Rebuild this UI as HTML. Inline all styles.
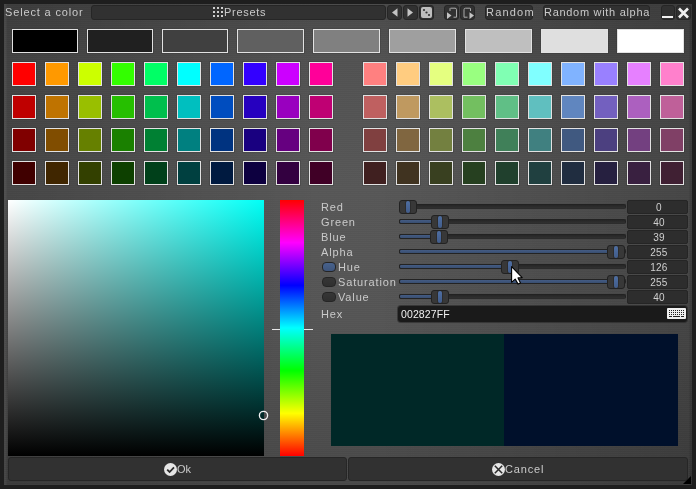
<!DOCTYPE html>
<html><head><meta charset="utf-8"><title>Select a color</title>
<style>
html,body{margin:0;padding:0;background:#1e1e1e;}
body{width:696px;height:489px;background:#1e1e1e;overflow:hidden;position:relative;font-family:"Liberation Sans",sans-serif;font-size:11px;color:#cfcfcf;}
#win{position:absolute;left:4px;top:4px;width:688px;height:481px;background:repeating-linear-gradient(to bottom,rgba(255,255,255,.012) 0,rgba(255,255,255,.012) 1px,rgba(0,0,0,.012) 1px,rgba(0,0,0,.012) 2px),linear-gradient(to right,rgba(255,255,255,.05) 0,rgba(255,255,255,.05) 2px,rgba(0,0,0,0) 3px,rgba(0,0,0,0) 685px,rgba(0,0,0,.12) 686px,rgba(0,0,0,.12) 688px),linear-gradient(to right,rgba(0,0,0,.2) 0%,rgba(0,0,0,0) 46%,rgba(0,0,0,0) 54%,rgba(0,0,0,.2) 100%),linear-gradient(to bottom,#4a4a4a 0%,#525252 12%,#575757 38%,#555555 66%,#494949 100%);}
.a{position:absolute;}
.sw{position:absolute;box-sizing:border-box;border:1px solid #e2e2e2;box-shadow:0 0 0 1px rgba(40,40,40,.2);}
.btn{position:absolute;box-sizing:border-box;background:#313131;border:1px solid #262626;border-radius:3px;}
.t{position:absolute;white-space:nowrap;line-height:12px;letter-spacing:.85px;color:#cacaca;will-change:transform;}
.track{position:absolute;box-sizing:border-box;height:5px;background:linear-gradient(#262626,#303030);border:1px solid #222;border-bottom-color:#2c2c2c;border-radius:2px;}
.fill{position:absolute;box-sizing:border-box;height:5px;background:linear-gradient(#445c84,#394e70);border:1px solid #232323;border-radius:2px;}
.h{position:absolute;box-sizing:border-box;width:18px;height:14px;background:#383838;overflow:hidden;border:1px solid #222;border-radius:3px;}
.h i{position:absolute;left:6px;top:0px;width:4px;height:12px;background:linear-gradient(#4e6ea2,#415c8a);border-radius:2px;box-shadow:0 0 0 1px rgba(30,30,30,.45);}
.vb{position:absolute;box-sizing:border-box;left:627px;width:61px;height:14px;background:#2d2d2d;border:1px solid #252525;border-radius:2px;text-align:center;line-height:14px;color:#cfcfcf;letter-spacing:.2px;font-size:10px;padding-left:3px;will-change:transform}
.rd{position:absolute;box-sizing:border-box;left:322px;width:14px;height:10px;border:1px solid #252525;border-radius:4px;background:linear-gradient(#363636,#2f2f2f);}
</style></head><body><div id="win"></div>

<div class="t" style="left:5px;top:6px;">Select a color</div>
<div class="btn" style="left:91px;top:5px;width:295px;height:15px;"></div>
<div class="a" style="left:213px;top:7px;width:2px;height:2px;background:#cfcfcf"></div>
<div class="a" style="left:213px;top:11px;width:2px;height:2px;background:#cfcfcf"></div>
<div class="a" style="left:213px;top:15px;width:2px;height:2px;background:#cfcfcf"></div>
<div class="a" style="left:217px;top:7px;width:2px;height:2px;background:#cfcfcf"></div>
<div class="a" style="left:217px;top:11px;width:2px;height:2px;background:#cfcfcf"></div>
<div class="a" style="left:217px;top:15px;width:2px;height:2px;background:#cfcfcf"></div>
<div class="a" style="left:221px;top:7px;width:2px;height:2px;background:#cfcfcf"></div>
<div class="a" style="left:221px;top:11px;width:2px;height:2px;background:#cfcfcf"></div>
<div class="a" style="left:221px;top:15px;width:2px;height:2px;background:#cfcfcf"></div>
<div class="t" style="left:224px;top:6px;letter-spacing:.7px">Presets</div>
<div class="btn" style="left:387px;top:5px;width:15px;height:15px;"></div>
<div class="btn" style="left:403px;top:5px;width:15px;height:15px;"></div>
<div class="btn" style="left:419px;top:5px;width:15px;height:15px;"></div>
<div class="btn" style="left:444px;top:5px;width:15px;height:15px;"></div>
<div class="btn" style="left:460px;top:5px;width:15px;height:15px;"></div>
<svg class="a" style="left:387px;top:5px" width="90" height="15" viewBox="0 0 90 15"><path d="M10.5 3.2 L10.5 11.8 L5 7.5 Z" fill="#c4c4c4"/><path d="M20.5 3.2 L20.5 11.8 L26 7.5 Z" fill="#c4c4c4"/><rect x="34" y="2" width="11" height="11" rx="2" fill="#bebebe"/><circle cx="37" cy="5" r="1.1" fill="#333"/><circle cx="39.5" cy="7.5" r="1.1" fill="#333"/><circle cx="42" cy="10" r="1.1" fill="#333"/><path d="M63.5 3.2 H68 Q69.5 3.2 69.5 4.7 V12.2 H66.5" fill="none" stroke="#ababab" stroke-width="1"/><path d="M63 3.2 V6" fill="none" stroke="#ababab" stroke-width="1"/><path d="M60 7.2 L60 14 L64.5 10.6 Z" fill="#c4c4c4"/><path d="M83 3.2 H78.5 Q77 3.2 77 4.7 V12.2 H80.5" fill="none" stroke="#ababab" stroke-width="1"/><path d="M83.5 3.2 V6" fill="none" stroke="#ababab" stroke-width="1"/><path d="M82.5 7.2 L82.5 14 L87 10.6 Z" fill="#c4c4c4"/></svg>
<div class="btn" style="left:485px;top:5px;width:48px;height:15px;"></div>
<div class="t" style="left:486px;top:6px;letter-spacing:1.2px">Random</div>
<div class="btn" style="left:543px;top:5px;width:107px;height:15px;"></div>
<div class="t" style="left:544px;top:6px;letter-spacing:.7px">Random with alpha</div>
<div class="btn" style="left:661px;top:5px;width:14px;height:15px;"></div>
<div class="a" style="left:662px;top:16px;width:11px;height:2px;background:#f0f0f0"></div>
<div class="btn" style="left:676px;top:5px;width:15px;height:15px;"></div>
<svg class="a" style="left:676px;top:5px" width="15" height="15"><path d="M3 3.5 L12 12.5 M12 3.5 L3 12.5" stroke="#f0f0f0" stroke-width="2.6" fill="none"/></svg>
<div class="sw" style="left:12px;top:29px;width:66px;height:24px;background:#000000"></div>
<div class="sw" style="left:87px;top:29px;width:66px;height:24px;background:#202020"></div>
<div class="sw" style="left:162px;top:29px;width:66px;height:24px;background:#404040"></div>
<div class="sw" style="left:237px;top:29px;width:67px;height:24px;background:#606060"></div>
<div class="sw" style="left:313px;top:29px;width:67px;height:24px;background:#808080"></div>
<div class="sw" style="left:389px;top:29px;width:67px;height:24px;background:#9f9f9f"></div>
<div class="sw" style="left:465px;top:29px;width:67px;height:24px;background:#bfbfbf"></div>
<div class="sw" style="left:541px;top:29px;width:67px;height:24px;background:#dfdfdf"></div>
<div class="sw" style="left:617px;top:29px;width:67px;height:24px;background:#ffffff"></div>
<div class="sw" style="left:12px;top:62px;width:24px;height:24px;background:#ff0000"></div>
<div class="sw" style="left:45px;top:62px;width:24px;height:24px;background:#ff9900"></div>
<div class="sw" style="left:78px;top:62px;width:24px;height:24px;background:#ccff00"></div>
<div class="sw" style="left:111px;top:62px;width:24px;height:24px;background:#33ff00"></div>
<div class="sw" style="left:144px;top:62px;width:24px;height:24px;background:#00ff66"></div>
<div class="sw" style="left:177px;top:62px;width:24px;height:24px;background:#00ffff"></div>
<div class="sw" style="left:210px;top:62px;width:24px;height:24px;background:#0066ff"></div>
<div class="sw" style="left:243px;top:62px;width:24px;height:24px;background:#3300ff"></div>
<div class="sw" style="left:276px;top:62px;width:24px;height:24px;background:#cc00ff"></div>
<div class="sw" style="left:309px;top:62px;width:24px;height:24px;background:#ff0099"></div>
<div class="sw" style="left:12px;top:95px;width:24px;height:24px;background:#bf0000"></div>
<div class="sw" style="left:45px;top:95px;width:24px;height:24px;background:#bf7300"></div>
<div class="sw" style="left:78px;top:95px;width:24px;height:24px;background:#99bf00"></div>
<div class="sw" style="left:111px;top:95px;width:24px;height:24px;background:#26bf00"></div>
<div class="sw" style="left:144px;top:95px;width:24px;height:24px;background:#00bf4d"></div>
<div class="sw" style="left:177px;top:95px;width:24px;height:24px;background:#00bfbf"></div>
<div class="sw" style="left:210px;top:95px;width:24px;height:24px;background:#004dbf"></div>
<div class="sw" style="left:243px;top:95px;width:24px;height:24px;background:#2600bf"></div>
<div class="sw" style="left:276px;top:95px;width:24px;height:24px;background:#9900bf"></div>
<div class="sw" style="left:309px;top:95px;width:24px;height:24px;background:#bf0073"></div>
<div class="sw" style="left:12px;top:128px;width:24px;height:24px;background:#800000"></div>
<div class="sw" style="left:45px;top:128px;width:24px;height:24px;background:#804d00"></div>
<div class="sw" style="left:78px;top:128px;width:24px;height:24px;background:#668000"></div>
<div class="sw" style="left:111px;top:128px;width:24px;height:24px;background:#1a8000"></div>
<div class="sw" style="left:144px;top:128px;width:24px;height:24px;background:#008033"></div>
<div class="sw" style="left:177px;top:128px;width:24px;height:24px;background:#008080"></div>
<div class="sw" style="left:210px;top:128px;width:24px;height:24px;background:#003380"></div>
<div class="sw" style="left:243px;top:128px;width:24px;height:24px;background:#190080"></div>
<div class="sw" style="left:276px;top:128px;width:24px;height:24px;background:#660080"></div>
<div class="sw" style="left:309px;top:128px;width:24px;height:24px;background:#80004c"></div>
<div class="sw" style="left:12px;top:161px;width:24px;height:24px;background:#400000"></div>
<div class="sw" style="left:45px;top:161px;width:24px;height:24px;background:#402600"></div>
<div class="sw" style="left:78px;top:161px;width:24px;height:24px;background:#334000"></div>
<div class="sw" style="left:111px;top:161px;width:24px;height:24px;background:#0d4000"></div>
<div class="sw" style="left:144px;top:161px;width:24px;height:24px;background:#00401a"></div>
<div class="sw" style="left:177px;top:161px;width:24px;height:24px;background:#004040"></div>
<div class="sw" style="left:210px;top:161px;width:24px;height:24px;background:#001a40"></div>
<div class="sw" style="left:243px;top:161px;width:24px;height:24px;background:#0d0040"></div>
<div class="sw" style="left:276px;top:161px;width:24px;height:24px;background:#330040"></div>
<div class="sw" style="left:309px;top:161px;width:24px;height:24px;background:#400026"></div>
<div class="sw" style="left:363px;top:62px;width:24px;height:24px;background:#ff8080"></div>
<div class="sw" style="left:396px;top:62px;width:24px;height:24px;background:#ffcc80"></div>
<div class="sw" style="left:429px;top:62px;width:24px;height:24px;background:#e5ff80"></div>
<div class="sw" style="left:462px;top:62px;width:24px;height:24px;background:#99ff80"></div>
<div class="sw" style="left:495px;top:62px;width:24px;height:24px;background:#80ffb3"></div>
<div class="sw" style="left:528px;top:62px;width:24px;height:24px;background:#80ffff"></div>
<div class="sw" style="left:561px;top:62px;width:24px;height:24px;background:#80b3ff"></div>
<div class="sw" style="left:594px;top:62px;width:24px;height:24px;background:#9980ff"></div>
<div class="sw" style="left:627px;top:62px;width:24px;height:24px;background:#e680ff"></div>
<div class="sw" style="left:660px;top:62px;width:24px;height:24px;background:#ff80cc"></div>
<div class="sw" style="left:363px;top:95px;width:24px;height:24px;background:#bf6060"></div>
<div class="sw" style="left:396px;top:95px;width:24px;height:24px;background:#bf9960"></div>
<div class="sw" style="left:429px;top:95px;width:24px;height:24px;background:#acbf60"></div>
<div class="sw" style="left:462px;top:95px;width:24px;height:24px;background:#73bf60"></div>
<div class="sw" style="left:495px;top:95px;width:24px;height:24px;background:#60bf86"></div>
<div class="sw" style="left:528px;top:95px;width:24px;height:24px;background:#60bfbf"></div>
<div class="sw" style="left:561px;top:95px;width:24px;height:24px;background:#6086bf"></div>
<div class="sw" style="left:594px;top:95px;width:24px;height:24px;background:#7360bf"></div>
<div class="sw" style="left:627px;top:95px;width:24px;height:24px;background:#ac60bf"></div>
<div class="sw" style="left:660px;top:95px;width:24px;height:24px;background:#bf6099"></div>
<div class="sw" style="left:363px;top:128px;width:24px;height:24px;background:#804040"></div>
<div class="sw" style="left:396px;top:128px;width:24px;height:24px;background:#806640"></div>
<div class="sw" style="left:429px;top:128px;width:24px;height:24px;background:#738040"></div>
<div class="sw" style="left:462px;top:128px;width:24px;height:24px;background:#4d8040"></div>
<div class="sw" style="left:495px;top:128px;width:24px;height:24px;background:#408059"></div>
<div class="sw" style="left:528px;top:128px;width:24px;height:24px;background:#408080"></div>
<div class="sw" style="left:561px;top:128px;width:24px;height:24px;background:#405980"></div>
<div class="sw" style="left:594px;top:128px;width:24px;height:24px;background:#4c4080"></div>
<div class="sw" style="left:627px;top:128px;width:24px;height:24px;background:#734080"></div>
<div class="sw" style="left:660px;top:128px;width:24px;height:24px;background:#804066"></div>
<div class="sw" style="left:363px;top:161px;width:24px;height:24px;background:#402020"></div>
<div class="sw" style="left:396px;top:161px;width:24px;height:24px;background:#403320"></div>
<div class="sw" style="left:429px;top:161px;width:24px;height:24px;background:#394020"></div>
<div class="sw" style="left:462px;top:161px;width:24px;height:24px;background:#264020"></div>
<div class="sw" style="left:495px;top:161px;width:24px;height:24px;background:#20402d"></div>
<div class="sw" style="left:528px;top:161px;width:24px;height:24px;background:#204040"></div>
<div class="sw" style="left:561px;top:161px;width:24px;height:24px;background:#202d40"></div>
<div class="sw" style="left:594px;top:161px;width:24px;height:24px;background:#262040"></div>
<div class="sw" style="left:627px;top:161px;width:24px;height:24px;background:#392040"></div>
<div class="sw" style="left:660px;top:161px;width:24px;height:24px;background:#402033"></div>
<div class="a" style="left:8px;top:200px;width:256px;height:256px;background:linear-gradient(to top,#000,rgba(0,0,0,0)),linear-gradient(to right,#fff,#00fff6)"></div>
<div class="a" style="left:280px;top:200px;width:24px;height:256px;background:linear-gradient(to bottom,#f00 0%,#f0f 16.667%,#00f 33.333%,#0ff 50%,#0f0 66.667%,#ff0 83.333%,#f00 100%)"></div>
<div class="a" style="left:272px;top:329px;width:8px;height:1px;background:#e8e8e8"></div>
<div class="a" style="left:304px;top:329px;width:9px;height:1px;background:#e8e8e8"></div>
<svg class="a" style="left:258px;top:410px" width="11" height="11"><circle cx="5.5" cy="5.5" r="4.1" fill="none" stroke="#f2f2f2" stroke-width="1.35"/></svg>
<div class="t" style="left:321px;top:201px;">Red</div>
<div class="track" style="left:399px;top:204px;width:227px;"></div>
<div class="h" style="left:399px;top:200px;"><i></i></div>
<div class="vb" style="top:200px;">0</div>
<div class="t" style="left:321px;top:216px;">Green</div>
<div class="track" style="left:399px;top:219px;width:227px;"></div>
<div class="fill" style="left:399px;top:219px;width:36px;"></div>
<div class="h" style="left:431px;top:215px;"><i></i></div>
<div class="vb" style="top:215px;">40</div>
<div class="t" style="left:321px;top:231px;">Blue</div>
<div class="track" style="left:399px;top:234px;width:227px;"></div>
<div class="fill" style="left:399px;top:234px;width:35px;"></div>
<div class="h" style="left:430px;top:230px;"><i></i></div>
<div class="vb" style="top:230px;">39</div>
<div class="t" style="left:321px;top:246px;">Alpha</div>
<div class="track" style="left:399px;top:249px;width:227px;"></div>
<div class="fill" style="left:399px;top:249px;width:212px;"></div>
<div class="h" style="left:607px;top:245px;"><i></i></div>
<div class="vb" style="top:245px;">255</div>
<div class="rd" style="top:262px;background:linear-gradient(#48628c,#3e557c);"></div>
<div class="t" style="left:338px;top:261px;">Hue</div>
<div class="track" style="left:399px;top:264px;width:227px;"></div>
<div class="fill" style="left:399px;top:264px;width:106px;"></div>
<div class="h" style="left:501px;top:260px;"><i></i></div>
<div class="vb" style="top:260px;">126</div>
<div class="rd" style="top:277px;"></div>
<div class="t" style="left:338px;top:276px;">Saturation</div>
<div class="track" style="left:399px;top:279px;width:227px;"></div>
<div class="fill" style="left:399px;top:279px;width:212px;"></div>
<div class="h" style="left:607px;top:275px;"><i></i></div>
<div class="vb" style="top:275px;">255</div>
<div class="rd" style="top:292px;"></div>
<div class="t" style="left:338px;top:291px;">Value</div>
<div class="track" style="left:399px;top:294px;width:227px;"></div>
<div class="fill" style="left:399px;top:294px;width:36px;"></div>
<div class="h" style="left:431px;top:290px;"><i></i></div>
<div class="vb" style="top:290px;">40</div>
<div class="t" style="left:321px;top:308px;">Hex</div>
<div class="a" style="left:398px;top:306px;width:289px;height:16px;background:#1a1a1a;border-radius:3px;box-shadow:0 0 0 1px rgba(30,30,30,.5)"></div>
<div class="t" style="left:401px;top:308px;color:#f0f0f0;letter-spacing:.1px;font-size:10.5px">002827FF</div>
<svg class="a" style="left:667px;top:308px" width="19" height="11" viewBox="0 0 19 11"><rect width="19" height="11" rx="1" fill="#f0f0f0"/><rect x="2" y="2" width="1" height="1" fill="#222"/><rect x="2" y="4" width="1" height="1" fill="#222"/><rect x="2" y="6" width="1" height="1" fill="#222"/><rect x="4" y="2" width="1" height="1" fill="#222"/><rect x="4" y="4" width="1" height="1" fill="#222"/><rect x="4" y="6" width="1" height="1" fill="#222"/><rect x="6" y="2" width="1" height="1" fill="#222"/><rect x="6" y="4" width="1" height="1" fill="#222"/><rect x="6" y="6" width="1" height="1" fill="#222"/><rect x="8" y="2" width="1" height="1" fill="#222"/><rect x="8" y="4" width="1" height="1" fill="#222"/><rect x="8" y="6" width="1" height="1" fill="#222"/><rect x="10" y="2" width="1" height="1" fill="#222"/><rect x="10" y="4" width="1" height="1" fill="#222"/><rect x="10" y="6" width="1" height="1" fill="#222"/><rect x="12" y="2" width="1" height="1" fill="#222"/><rect x="12" y="4" width="1" height="1" fill="#222"/><rect x="12" y="6" width="1" height="1" fill="#222"/><rect x="14" y="2" width="1" height="1" fill="#222"/><rect x="14" y="4" width="1" height="1" fill="#222"/><rect x="14" y="6" width="1" height="1" fill="#222"/><rect x="16" y="2" width="1" height="1" fill="#222"/><rect x="16" y="4" width="1" height="1" fill="#222"/><rect x="16" y="6" width="1" height="1" fill="#222"/><rect x="2" y="8" width="3" height="1" fill="#222"/><rect x="6" y="8" width="7" height="1" fill="#222"/><rect x="14" y="8" width="3" height="1" fill="#222"/></svg>
<div class="a" style="left:331px;top:334px;width:173px;height:112px;background:#002827"></div>
<div class="a" style="left:504px;top:334px;width:174px;height:112px;background:#00102b"></div>
<div class="btn" style="left:8px;top:457px;width:339px;height:24px;"></div>
<div class="btn" style="left:348px;top:457px;width:340px;height:24px;"></div>
<svg class="a" style="left:164px;top:463px" width="13" height="13"><circle cx="6.5" cy="6.5" r="6.5" fill="#e6e6e6"/><path d="M3.2 6.6 L5.6 9 L10 4.3" stroke="#2a2a2a" stroke-width="1.8" fill="none"/></svg>
<div class="t" style="left:177px;top:463px;letter-spacing:0">Ok</div>
<svg class="a" style="left:492px;top:463px" width="13" height="13"><circle cx="6.5" cy="6.5" r="6.5" fill="#e6e6e6"/><path d="M2.8 2.8 L10.2 10.2 M10.2 2.8 L2.8 10.2" stroke="#2a2a2a" stroke-width="1.5" fill="none"/></svg>
<div class="t" style="left:505px;top:463px;">Cancel</div>
<svg class="a" style="left:683px;top:476px" width="8" height="8"><path d="M8 0 V8 H0 Z" fill="#000"/></svg>
<svg class="a" style="left:500px;top:260px" width="30" height="30" viewBox="500 260 30 30"><path d="M511.6 266.7 L511.6 282.3 L515.2 279.1 L518.1 284.1 L520.5 283.0 L518.0 277.9 L522.2 277.6 Z" fill="#fff" stroke="#000" stroke-width="1.1" stroke-linejoin="round"/></svg>
</body></html>
